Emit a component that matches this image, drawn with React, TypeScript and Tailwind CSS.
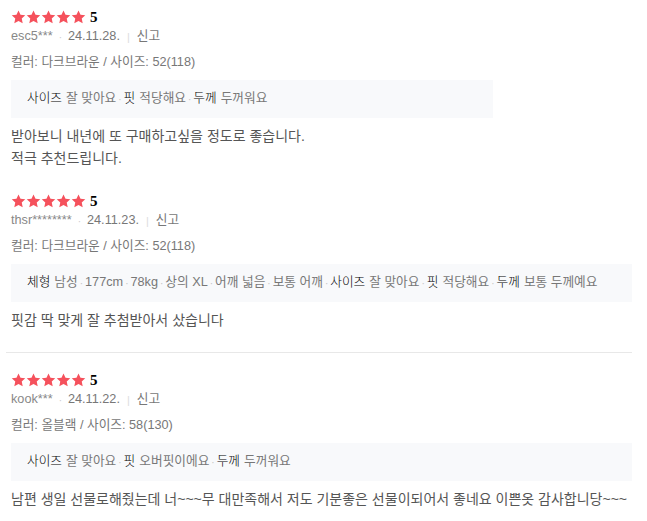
import React from 'react';

type Tag = { label: string; value: string };

type Review = {
  user: string;
  date: string;
  option: string;
  tags: Tag[];
  body: string[];
  boxWide: boolean;
};

const reviews: Review[] = [
  {
    user: 'esc5***',
    date: '24.11.28.',
    option: '컬러: 다크브라운 / 사이즈: 52(118)',
    tags: [
      { label: '사이즈', value: '잘 맞아요' },
      { label: '핏', value: '적당해요' },
      { label: '두께', value: '두꺼워요' },
    ],
    body: ['받아보니 내년에 또 구매하고싶을 정도로 좋습니다.', '적극 추천드립니다.'],
    boxWide: false,
  },
  {
    user: 'thsr********',
    date: '24.11.23.',
    option: '컬러: 다크브라운 / 사이즈: 52(118)',
    tags: [
      { label: '체형', value: '남성' },
      { label: '', value: '177cm' },
      { label: '', value: '78kg' },
      { label: '', value: '상의 XL' },
      { label: '', value: '어깨 넓음' },
      { label: '', value: '보통 어깨' },
      { label: '사이즈', value: '잘 맞아요' },
      { label: '핏', value: '적당해요' },
      { label: '두께', value: '보통 두께예요' },
    ],
    body: ['핏감 딱 맞게 잘 추첨받아서 샀습니다'],
    boxWide: true,
  },
  {
    user: 'kook***',
    date: '24.11.22.',
    option: '컬러: 올블랙 / 사이즈: 58(130)',
    tags: [
      { label: '사이즈', value: '잘 맞아요' },
      { label: '핏', value: '오버핏이에요' },
      { label: '두께', value: '두꺼워요' },
    ],
    body: ['남편 생일 선물로해줬는데 너~~~무 대만족해서 저도 기분좋은 선물이되어서 좋네요 이쁜옷 감사합니당~~~'],
    boxWide: true,
  },
];

function Star() {
  return (
    <svg width="15" height="14" viewBox="0 0 24 23" className="block">
      <path
        d="M12 0.8l3.3 7.1 7.8 0.9-5.8 5.3 1.6 7.7L12 17.9l-6.9 3.9 1.6-7.7L0.9 8.8l7.8-0.9z"
        fill="#f5515c"
      />
    </svg>
  );
}

function ReviewItem({ r }: { r: Review }) {
  return (
    <div className="pl-[11px]">
      {/* rating */}
      <div className="flex items-center h-[16px]">
        <div className="flex">
          <Star />
          <Star />
          <Star />
          <Star />
          <Star />
        </div>
        <span
          className="ml-[4px] text-[15px] font-bold text-black leading-none"
          style={{ fontFamily: '"Liberation Serif", serif' }}
        >
          5
        </span>
      </div>

      {/* meta */}
      <div className="mt-[3px] flex items-center h-[18px] text-[12.7px] text-[#888]">
        <span>{r.user}</span>
        <span className="mx-[6px] text-[#ccc] text-[10px]">·</span>
        <span className="text-[#777]">{r.date}</span>
        <span className="mx-[7px] text-[#ddd] text-[11px]">|</span>
        <span className="text-[#777]">신고</span>
      </div>

      {/* option */}
      <div className="mt-[7px] h-[18px] leading-[18px] text-[12.7px] text-[#777]">{r.option}</div>

      {/* tags */}
      <div
        className={`mt-[9px] h-[38px] bg-[#f8f9fb] flex items-center pl-[16px] text-[12.7px] whitespace-nowrap ${
          r.boxWide ? 'w-[621px]' : 'w-[482px]'
        }`}
      >
        {r.tags.map((t, i) => (
          <React.Fragment key={i}>
            {i > 0 && <span className="mx-[2px] text-[#c4c4c4] text-[10px]">·</span>}
            {t.label && <span className="text-black font-light">{t.label}</span>}
            {t.label && <span className="w-[4px]" />}
            <span className="text-[#777]">{t.value}</span>
          </React.Fragment>
        ))}
      </div>

      {/* body */}
      <div className="mt-[7px] text-[14px] leading-[22px] text-[#555]">
        {r.body.map((l, i) => (
          <div key={i}>{l}</div>
        ))}
      </div>
    </div>
  );
}

export default function App() {
  return (
    <div
      className="w-[647px] h-[521px] bg-white overflow-hidden pt-[9px]"
      style={{ fontFamily: '"Liberation Sans", "Noto Sans CJK KR", sans-serif' }}
    >
      <ReviewItem r={reviews[0]} />
      <div className="mt-[24px]">
        <ReviewItem r={reviews[1]} />
      </div>
      <div className="mt-[21px] ml-[6px] w-[626px] h-px bg-[#e8e8e8]" />
      <div className="mt-[19px]">
        <ReviewItem r={reviews[2]} />
      </div>
    </div>
  );
}
